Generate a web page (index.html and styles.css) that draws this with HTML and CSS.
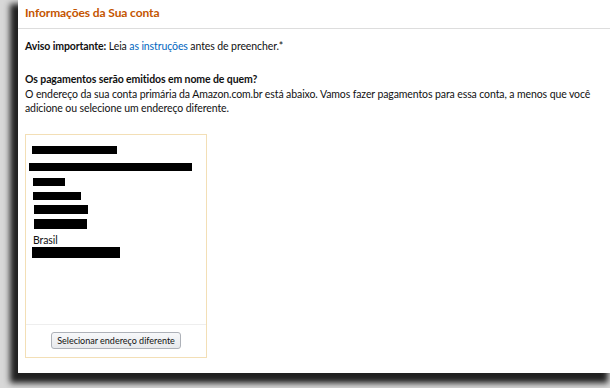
FILE: index.html
```html
<!DOCTYPE html>
<html lang="pt-BR">
<head>
<meta charset="utf-8">
<title>Informações da Sua conta</title>
<link rel="stylesheet" href="styles.css">
</head>
<body>
<div class="panel">
  <div class="header">Informações da Sua conta</div>
  <div class="content">
    <p class="notice"><b>Aviso importante:</b> Leia <a href="#">as instruções</a> antes de preencher.*</p>
    <p class="question"><b>Os pagamentos serão emitidos em nome de quem?</b><br>O endereço da sua conta primária da Amazon.com.br está abaixo. Vamos fazer pagamentos para essa conta, a menos que você adicione ou selecione um endereço diferente.</p>
    <div class="card">
      <div class="card-body">
        <span class="redact r1"></span>
        <span class="redact r2"></span>
        <span class="redact r3"></span>
        <span class="redact r4"></span>
        <span class="redact r5"></span>
        <span class="redact r6"></span>
        <span class="country">Brasil</span>
        <span class="redact r7"></span>
      </div>
      <div class="card-footer">
        <button class="btn">Selecionar endereço diferente</button>
      </div>
    </div>
  </div>
</div>
</body>
</html>
```

FILE: styles.css
```css
html, body {
  margin: 0;
  padding: 0;
}
body {
  width: 610px;
  height: 388px;
  overflow: hidden;
  background: #d8d8d8;
  font-family: Lato, "Noto Sans", sans-serif;
  font-size: 10.5px;
  letter-spacing: -0.1px;
  color: #111;
}
.panel {
  margin-left: 18px;
  height: 373px;
  background: #fff;
  box-shadow: -5px 7px 6px 3px rgba(0, 0, 0, 0.85);
}
.header {
  height: 28px;
  line-height: 25px;
  padding-left: 7px;
  border-bottom: 1px solid #ddd;
  color: #c45500;
  font-weight: bold;
  font-size: 12px;
}
.content {
  padding: 10px 7px 0;
}
.notice {
  margin: 0 0 19px;
  line-height: 14px;
}
a {
  color: #0066c0;
  text-decoration: none;
}
.question {
  margin: 0;
  line-height: 14.5px;
}
.card {
  margin-top: 18px;
  width: 180px;
  height: 222px;
  border: 1px solid #f3dfb6;
  display: flex;
  flex-direction: column;
}
.card-body {
  flex: 1;
  display: flex;
  flex-direction: column;
  align-items: flex-start;
  padding-top: 11px;
}
.redact {
  display: block;
  background: #000;
}
.r1 { margin-left: 6px; width: 85px; height: 8px; }
.r2 { margin-left: 3px; margin-top: 9px; width: 163px; height: 8px; }
.r3 { margin-left: 7px; margin-top: 7px; width: 32px; height: 8px; }
.r4 { margin-left: 7px; margin-top: 6px; width: 48px; height: 8px; }
.r5 { margin-left: 8px; margin-top: 5px; width: 54px; height: 9px; }
.r6 { margin-left: 8px; margin-top: 5px; width: 53px; height: 10px; }
.country { margin-left: 7px; margin-top: 4px; line-height: 14px; }
.r7 { margin-left: 6px; margin-top: 0; width: 88px; height: 11px; }
.card-footer {
  height: 32px;
  border-top: 1px solid #eee;
  display: flex;
  align-items: center;
  justify-content: center;
}
.btn {
  font-family: Lato, "Noto Sans", sans-serif;
  font-size: 9px;
  color: #111;
  height: 17px;
  padding: 0 5px;
  border: 1px solid #adb1b8;
  border-radius: 3px;
  background: linear-gradient(#f7f8fa, #e7e9ec);
  line-height: 15px;
}
```
